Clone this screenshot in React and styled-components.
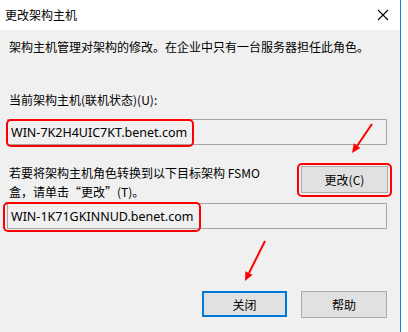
import React from "react";
import styled, { createGlobalStyle } from "styled-components";

const GlobalStyle = createGlobalStyle`
  html, body {
    margin: 0;
    padding: 0;
    background: #ffffff;
  }
  body {
    font-family: "Noto Sans CJK SC", "Noto Sans", sans-serif;
    font-size: 12px;
    color: #000000;
  }
`;

const Window = styled.div`
  position: relative;
  width: 400px;
  height: 332px;
  border-right: 1px solid #1c7fd6;
  display: flex;
  flex-direction: column;
  background: #f0f0f0;
  overflow: hidden;
`;

const TitleBar = styled.div`
  height: 30px;
  flex: none;
  background: #ffffff;
  display: flex;
  align-items: center;
  justify-content: space-between;
  padding: 0 11px 0 5px;
`;

const Title = styled.span`
  font-size: 12px;
  line-height: 16px;
`;

const Body = styled.div`
  display: flex;
  flex-direction: column;
  padding: 9px 13px 0 7px;
`;

const Text = styled.div`
  padding-left: 2px;
  font-size: 12px;
  line-height: ${(p) => p.$lh || 16}px;
  margin-top: ${(p) => p.$top || 0}px;
  white-space: nowrap;
`;

const Field = styled.div`
  height: 24px;
  margin-top: ${(p) => p.$top || 0}px;
  border: 1px solid #a5a5a5;
  background: #f0f0f0;
  display: flex;
  align-items: center;
  padding-left: 3px;
  font-family: "Noto Sans", "Noto Sans CJK SC", sans-serif;
  font-size: 12.5px;
`;

const ChangeRow = styled.div`
  display: flex;
  justify-content: space-between;
  margin-top: 18px;
`;

const Button = styled.button`
  width: ${(p) => p.$w || 86}px;
  height: ${(p) => (p.$default ? 26 : 27)}px;
  box-sizing: border-box;
  background: #e1e1e1;
  border: ${(p) => (p.$default ? "2px solid #0078d7" : "1px solid #adadad")};
  font-family: "Noto Sans CJK SC", sans-serif;
  font-size: 12px;
  color: #000000;
  padding: 0;
  margin: 0;
`;

const ChangeButton = styled(Button)`
  margin-top: 3px;
  margin-right: -1px;
`;

const Footer = styled.div`
  display: flex;
  justify-content: flex-end;
  gap: 14px;
  margin-top: 62px;
`;

const Overlay = styled.svg`
  position: absolute;
  left: 0;
  top: 0;
  pointer-events: none;
`;

const CloseIcon = () => (
  <svg width="12" height="12" viewBox="0 0 12 12">
    <path d="M1 1 L11 11 M11 1 L1 11" stroke="#000" strokeWidth="1.1" fill="none" />
  </svg>
);

const Annotations = () => (
  <Overlay width="400" height="332" viewBox="0 0 400 332">
    <g fill="none" stroke="#ff0000" strokeWidth="2">
      <rect x="7" y="120" width="186" height="26" rx="4" />
      <rect x="298" y="164" width="93" height="32" rx="4" />
      <rect x="4" y="203" width="196" height="28" rx="4" />
      <line x1="372" y1="124" x2="357" y2="146" />
      <line x1="265" y1="241" x2="249" y2="273" />
    </g>
    <g fill="#ff0000">
      <polygon points="352,153 360.4,147.9 353.8,143.3" />
      <polygon points="245,281 252.6,274.8 245.4,271.2" />
    </g>
  </Overlay>
);

export default function App() {
  return (
    <>
      <GlobalStyle />
      <Window>
        <TitleBar>
          <Title>更改架构主机</Title>
          <CloseIcon />
        </TitleBar>
        <Body>
          <Text>架构主机管理对架构的修改。在企业中只有一台服务器担任此角色。</Text>
          <Text $top={37}>当前架构主机(联机状态)(U):</Text>
          <Field $top={11}>WIN-7K2H4UIC7KT.benet.com</Field>
          <ChangeRow>
            <Text $lh={19}>
              若要将架构主机角色转换到以下目标架构 FSMO
              <br />
              盒，请单击“更改”(T)。
            </Text>
            <ChangeButton $w={87}>更改(C)</ChangeButton>
          </ChangeRow>
          <Field $top={2}>WIN-1K71GKINNUD.benet.com</Field>
          <Footer>
            <Button $default $w={85}>关闭</Button>
            <Button>帮助</Button>
          </Footer>
        </Body>
        <Annotations />
      </Window>
    </>
  );
}
